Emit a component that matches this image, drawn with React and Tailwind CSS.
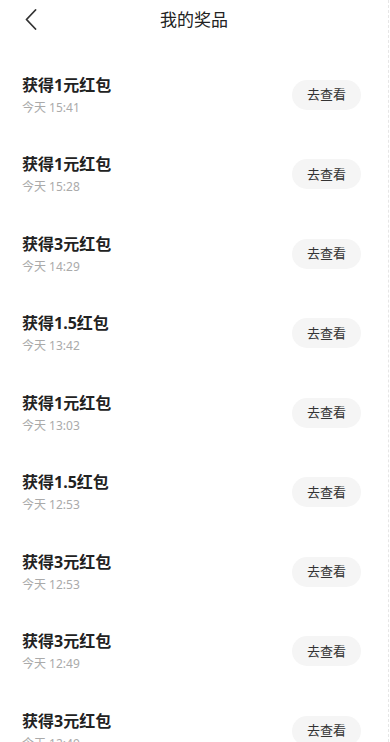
import React from "react";

const items = [
  ["获得1元红包", "今天 15:41"],
  ["获得1元红包", "今天 15:28"],
  ["获得3元红包", "今天 14:29"],
  ["获得1.5红包", "今天 13:42"],
  ["获得1元红包", "今天 13:03"],
  ["获得1.5红包", "今天 12:53"],
  ["获得3元红包", "今天 12:53"],
  ["获得3元红包", "今天 12:49"],
  ["获得3元红包", "今天 12:49"],
];

export default function App() {
  return (
    <div
      className="h-[742px] w-[390px] overflow-hidden bg-white"
      style={{ fontFamily: '"Noto Sans", "Noto Sans CJK SC", sans-serif' }}
    >
      <div className="h-full w-[389px] border-r border-dashed border-[#e6e6e6]">
        <div className="relative flex h-[40px] items-center justify-center">
          <button className="absolute left-[24px] top-[7px] flex h-[24px] w-[14px] items-center justify-center">
            <svg width="12" height="21" viewBox="0 0 12 21" fill="none">
              <path d="M10.5 1L1.5 10.5L10.5 20" stroke="#333" strokeWidth="1.8" strokeLinecap="round" strokeLinejoin="round" />
            </svg>
          </button>
          <div className="text-[17px] leading-[24px] text-[#222]">我的奖品</div>
        </div>
        <div className="pt-[15px]">
          {items.map(([t, d], i) => (
            <div key={i} className="flex h-[79.5px] items-center justify-between pl-[22px] pr-[27px]">
              <div className="flex flex-col">
                <div className="text-[16px] font-bold leading-[22px] text-[#222]">{t}</div>
                <div className="mt-[4px] text-[12px] leading-[16px] text-[#aaaaaa]">{d}</div>
              </div>
              <div className="flex h-[30px] w-[69px] items-center justify-center rounded-full bg-[#f5f5f5] text-[13px] text-[#333]">
                去查看
              </div>
            </div>
          ))}
        </div>
      </div>
    </div>
  );
}
